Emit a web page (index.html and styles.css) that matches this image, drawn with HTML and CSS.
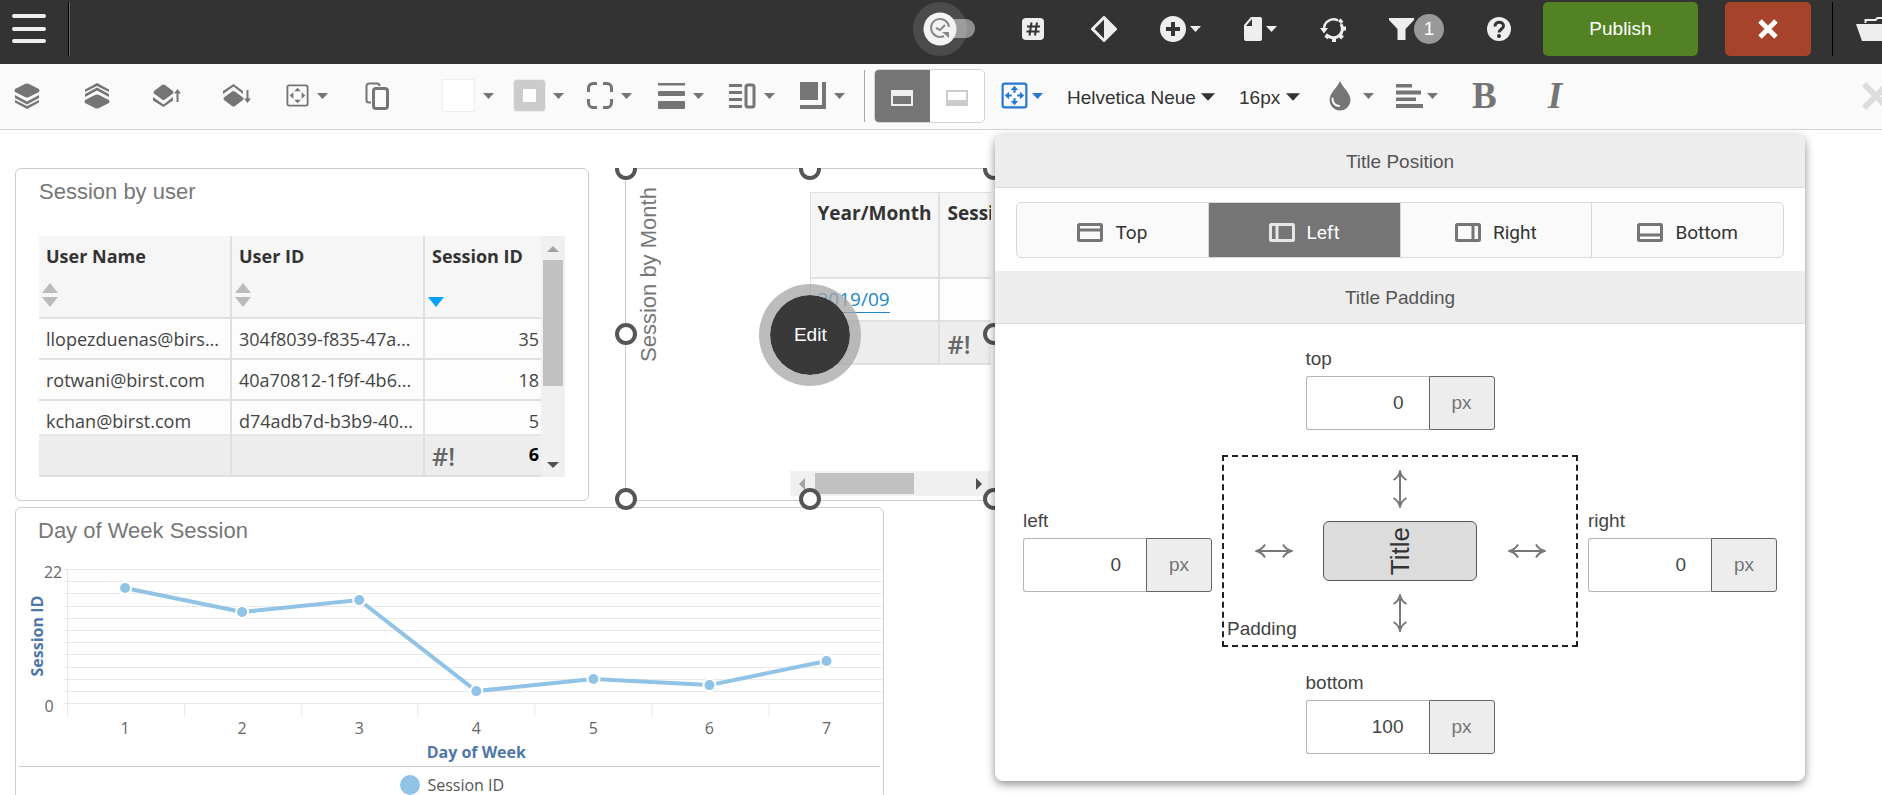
FILE: index.html
```html
<!DOCTYPE html>
<html lang="en">
<head>
    <meta charset="UTF-8">
    <meta name="viewport" content="width=device-width, initial-scale=1.0">
    <title>Dashboard Editor</title>
    <link rel="stylesheet" href="styles.css">
</head>
<body>
    <svg width="0" height="0" class="defs" aria-hidden="true">
        <symbol id="caret" viewBox="0 0 11 6"><path d="M0 0h11L5.500 6z" fill="currentColor"/></symbol>
        <symbol id="move-box" viewBox="0 0 25 25">
            <rect x="1.500" y="1.500" width="22" height="22" rx="2" fill="none" stroke="currentColor" stroke-width="2"/>
            <path d="M12.500 4l3.500 4h-7zM12.500 21l3.500-4h-7zM4 12.500l4-3.500v7zM21 12.500l-4-3.500v7z" fill="currentColor"/>
        </symbol>
        <symbol id="move-box-bold" viewBox="0 0 25 25">
            <rect x="1.500" y="1.500" width="22" height="22" rx="2" fill="none" stroke="currentColor" stroke-width="2"/>
            <path d="M12.500 3.500l3.500 4h-2.500v2.500h-2V7.500H9zM12.500 21.500l3.500-4h-2.500V15h-2v2.500H9zM3.500 12.500l4-3.500v2.500H10v2H7.500V16zM21.500 12.500l-4-3.500v2.500H15v2h2.500V16z" fill="currentColor"/>
        </symbol>
        <symbol id="arrow-h" viewBox="0 0 38 16"><path d="M3 8h32M10 1.500C8 5 5 7 1.500 8 5 9 8 11 10 14.500M28 1.500c2 3.500 5 5.500 8.500 6.500-3.500 1-6.500 3-8.500 6.500" fill="none" stroke="#777" stroke-width="2"/></symbol>
        <symbol id="arrow-v" viewBox="0 0 16 38"><path d="M8 3v32M1.500 10C5 8 7 5 8 1.500 9 5 11 8 14.500 10M1.500 28C5 30 7 33 8 36.500 9 33 11 30 14.500 28" fill="none" stroke="#777" stroke-width="2"/></symbol>
    </svg>

    <header class="topbar">
        <button class="menu-btn" aria-label="Menu">
            <svg width="34" height="32" viewBox="0 0 34 32"><path d="M2 3h30M2 16h30M2 28h30" stroke="#eee" stroke-width="4" stroke-linecap="round"/></svg>
        </button>
        <span class="topbar-divider"></span>
        <div class="actions">
            <label class="switch">
                <input type="checkbox" aria-label="Auto refresh">
                <svg width="62" height="54" viewBox="0 0 62 54">
                    <rect x="20" y="17" width="42" height="19" rx="9" fill="#8f8f8f"/>
                    <circle cx="27" cy="27" r="27" fill="#fff" fill-opacity=".12"/>
                    <circle cx="27" cy="27" r="16.500" fill="#f3f3f3"/>
                    <path d="M31 34a9 9 0 1 1 5-9" fill="none" stroke="#888" stroke-width="2"/>
                    <path d="M29 30h7v6z" fill="#888"/>
                    <path d="M23 26l4 2 5-5" fill="none" stroke="#888" stroke-width="2"/>
                </svg>
            </label>
            <button class="icon-btn wide" aria-label="Number format">
                <svg width="22" height="22" viewBox="0 0 22 22"><rect width="22" height="22" rx="4" fill="#eee"/><path d="M9.500 4.500l-2 13M15 4.500l-2 13M5 8.500h13M4.500 13.500h13" stroke="#333" stroke-width="2"/></svg>
            </button>
            <button class="icon-btn" aria-label="Contrast">
                <svg width="26" height="26" viewBox="0 0 26 26"><path d="M13 1.500L24.500 13 13 24.500 1.500 13z" fill="none" stroke="#eee" stroke-width="3" stroke-linejoin="round"/><path d="M13 2l11 11-11 11z" fill="#eee"/></svg>
            </button>
            <button class="icon-btn" aria-label="Add">
                <svg width="26" height="26" viewBox="0 0 26 26"><circle cx="13" cy="13" r="13" fill="#eee"/><path d="M13 6v14M6 13h14" stroke="#333" stroke-width="4"/></svg>
                <svg class="caret"><use href="#caret"/></svg>
            </button>
            <button class="icon-btn" aria-label="Page">
                <svg width="18" height="24" viewBox="0 0 18 24"><path d="M7 0h9a2 2 0 0 1 2 2v20a2 2 0 0 1-2 2H2a2 2 0 0 1-2-2V8z" fill="#eee"/><path d="M8 2v7H2z" fill="#333"/></svg>
                <svg class="caret"><use href="#caret"/></svg>
            </button>
            <button class="icon-btn" aria-label="Refresh settings">
                <svg width="26" height="26" viewBox="0 0 26 26">
                    <path d="M4 13a9.500 9.500 0 0 1 14-8.500" fill="none" stroke="#eee" stroke-width="2.500"/>
                    <path d="M0 12h8l-4 5.500z" fill="#eee"/>
                    <path d="M21 8a9 9 0 0 1-13 12" fill="none" stroke="#eee" stroke-width="3"/>
                    <path d="M19.500 6.500l2.500-2.500M21 12.500h5M19.500 19l3 3M14 21v5M8.500 18.500L6 22" stroke="#eee" stroke-width="4"/>
                </svg>
            </button>
            <button class="icon-btn filter" aria-label="Filters">
                <svg width="25" height="22" viewBox="0 0 25 22"><path d="M0 0h25v2l-8.500 9v11h-8V11L0 2z" fill="#eee"/></svg>
                <span class="count">1</span>
            </button>
            <button class="icon-btn" aria-label="Help">
                <svg width="24" height="24" viewBox="0 0 24 24"><circle cx="12" cy="12" r="12" fill="#eee"/><path d="M8 9.500C8 3.500 16.500 4 16.500 9c0 3-4.500 3.500-4.500 6.500" fill="none" stroke="#333" stroke-width="3"/><circle cx="12" cy="19" r="2" fill="#333"/></svg>
            </button>
        </div>
        <button class="publish">Publish</button>
        <button class="close" aria-label="Close">
            <svg width="20" height="20" viewBox="0 0 20 20"><path d="M2 2l16 16M18 2L2 18" stroke="#fff" stroke-width="5"/></svg>
        </button>
        <span class="topbar-divider dark"></span>
        <button class="folder" aria-label="Open folder">
            <svg width="40" height="24" viewBox="0 0 40 24"><path d="M0 7h40l-6 17H6z" fill="#eee"/><path d="M9.500 6V3h10l2-2H34v5" fill="none" stroke="#eee" stroke-width="2"/></svg>
        </button>
    </header>

    <div class="toolbar">
        <div class="tools arrange">
            <button aria-label="Bring to front"><svg width="26" height="26" viewBox="0 0 26 26"><path d="M11 1q2-1 4 0l10 5q1 1.500 0 3l-10 5q-2 1-4 0L1 9Q0 7.500 1 6z"/><path d="M1 12l12 6.500L25 12v3l-12 6.500L1 15zM1 17l12 6 12-6v2.500L13 26 1 19.500z"/></svg></button>
            <button aria-label="Send to back"><svg width="26" height="26" viewBox="0 0 26 26"><path d="M11 25q2 1 4 0l10-5q1-1.500 0-3l-10-5q-2-1-4 0L1 17q-1 1.500 0 3z"/><path d="M1 14l12-6.500L25 14v-3L13 4.500 1 11zM1 9l12-6 12 6V6.500L13 0 1 6.500z"/></svg></button>
            <button aria-label="Bring forward"><svg width="28" height="24" viewBox="0 0 28 24"><path d="M9 1q1.500-1 3 0l8 6q1 1 0 2.500l-8 6q-1.500 1-3 0l-8-6Q0 8.500 1 7z"/><path d="M0 13l10.500 7.500L20 13v3.500L10.500 23 0 16.500zM23.500 18V9.500H21L24.500 5l3.500 4.500h-2.500V18z"/></svg></button>
            <button aria-label="Send backward"><svg width="28" height="24" viewBox="0 0 28 24"><path d="M9 22q1.500 1 3 0l8-6q1-1 0-2.500l-8-6q-1.500-1-3 0l-8 6q-1 1 0 2.500z"/><path d="M0 10l10.500-7.500L20 10V7L10.500 0 0 7zM23.500 6v8.500H21l3.500 4.500 3.500-4.500h-2.500V6z"/></svg></button>
            <button aria-label="Padding"><svg width="23" height="23"><use href="#move-box"/></svg><svg class="caret"><use href="#caret"/></svg></button>
            <button aria-label="Duplicate"><svg width="24" height="28" viewBox="0 0 24 28" fill="none" stroke="#757575"><path d="M6 20.500H4a2.500 2.500 0 0 1-2.500-2.500V4A2.500 2.500 0 0 1 4 1.500h8A2.500 2.500 0 0 1 14.500 4" stroke-width="2"/><rect x="8.500" y="6.500" width="14" height="20" rx="2.500" stroke-width="3"/></svg></button>
        </div>
        <div class="tools styling">
            <button aria-label="Background color"><span class="swatch"></span><svg class="caret"><use href="#caret"/></svg></button>
            <button aria-label="Border color"><span class="swatch border-swatch"></span><svg class="caret"><use href="#caret"/></svg></button>
            <button aria-label="Border style"><svg width="26" height="27" viewBox="0 0 26 27"><path d="M1.500 10V6A4.500 4.500 0 0 1 6 1.500h4M16 1.500h4A4.500 4.500 0 0 1 24.500 6v4M24.500 17v4a4.500 4.500 0 0 1-4.500 4.500h-4M10 25.500H6A4.500 4.500 0 0 1 1.500 21v-4" fill="none" stroke="#757575" stroke-width="3"/></svg><svg class="caret"><use href="#caret"/></svg></button>
            <button aria-label="Border width"><svg width="27" height="26" viewBox="0 0 27 26"><path d="M0 0h27v2.500H0z"/><rect y="8" width="27" height="5" rx="1"/><rect y="18" width="27" height="8" rx="1"/></svg><svg class="caret"><use href="#caret"/></svg></button>
            <button aria-label="Spacing"><svg width="27" height="26" viewBox="0 0 27 26"><path d="M0 1h13v3H0zM0 8h13v3H0zM0 15h13v3H0zM0 22h13v3H0z"/><rect x="17" y="2" width="8" height="22" rx="2" fill="none" stroke="#757575" stroke-width="3"/></svg><svg class="caret"><use href="#caret"/></svg></button>
            <button aria-label="Shadow"><svg width="26" height="27" viewBox="0 0 26 27"><path d="M0 0h18v18H0zM22 0h4v27H0v-4h22z"/></svg><svg class="caret"><use href="#caret"/></svg></button>
        </div>
        <span class="toolbar-divider"></span>
        <div class="view-toggle">
            <button class="active" aria-label="Show title"><svg width="22" height="16" viewBox="0 0 22 16"><rect x="1" y="1" width="20" height="14" fill="none" stroke="#eee" stroke-width="2"/><path d="M0 0h22v6H0z" fill="#eee"/></svg></button>
            <button aria-label="Hide title"><svg width="22" height="16" viewBox="0 0 22 16"><rect x="1" y="1" width="20" height="14" fill="none" stroke="#ccc" stroke-width="2"/><path d="M0 10h22v6H0z" fill="#ccc"/></svg></button>
        </div>
        <div class="text-tools">
            <button class="title-layout" aria-label="Title layout"><svg width="27" height="27"><use href="#move-box-bold"/></svg><svg class="caret"><use href="#caret"/></svg></button>
            <label class="picker"><select aria-label="Font family"><option>Helvetica Neue</option></select><svg class="caret"><use href="#caret"/></svg></label>
            <label class="picker"><select aria-label="Font size"><option>16px</option></select><svg class="caret"><use href="#caret"/></svg></label>
        </div>
        <div class="font-tools">
            <button class="drop" aria-label="Text color"><svg width="22" height="30" viewBox="0 0 22 30"><path d="M11 0c3 7 10.500 12 10.500 19a10.500 10.500 0 0 1-21 0C.5 12 8 7 11 0z"/><path d="M3.500 17.500c0 4 2 7 6.500 7.500" fill="none" stroke="#fafafa" stroke-width="2" stroke-linecap="round"/></svg><svg class="caret"><use href="#caret"/></svg></button>
            <button class="align" aria-label="Text align"><svg width="27" height="24" viewBox="0 0 27 24"><path d="M0 0h16v3.500H0zM0 6.500h25v4H0zM0 13.500h20v3.500H0zM0 20h27v4H0z"/></svg><svg class="caret"><use href="#caret"/></svg></button>
        </div>
        <div class="emphasis">
            <button class="bold">B</button>
            <button class="italic">I</button>
        </div>
        <button class="dismiss" aria-label="Dismiss"><svg width="30" height="30" viewBox="0 0 30 30"><path d="M2 3l24 24M26 3L2 27" stroke="#ddd" stroke-width="6"/></svg></button>
    </div>

    <main class="dashboard">
        <div class="row">
            <section class="tile tile-users">
                <h2>Session by user</h2>
                <div class="table-wrap">
                    <table class="grid users">
                        <thead>
                            <tr>
                                <th>User Name<svg class="sort" viewBox="0 0 16 24"><path d="M8 0l8 10H0zM0 14h16L8 24z"/></svg></th>
                                <th>User ID<svg class="sort" viewBox="0 0 16 24"><path d="M8 0l8 10H0zM0 14h16L8 24z"/></svg></th>
                                <th>Session ID<svg class="sort sorted" viewBox="0 0 16 24"><path d="M0 14h16L8 24z"/></svg></th>
                            </tr>
                        </thead>
                        <tbody>
                            <tr>
                                <td>llopezduenas@birs...</td>
                                <td>304f8039-f835-47a...</td>
                                <td class="num">35</td>
                            </tr>
                            <tr>
                                <td>rotwani@birst.com</td>
                                <td>40a70812-1f9f-4b6...</td>
                                <td class="num">18</td>
                            </tr>
                            <tr class="last">
                                <td>kchan@birst.com</td>
                                <td>d74adb7d-b3b9-40...</td>
                                <td class="num">5</td>
                            </tr>
                        </tbody>
                        <tfoot>
                            <tr>
                                <td></td>
                                <td></td>
                                <td><div class="total"><span class="hash">#!</span><b>6</b></div></td>
                            </tr>
                        </tfoot>
                    </table>
                    <div class="vscroll">
                        <svg class="scroll-arrow" viewBox="0 0 12 6"><path d="M0 6h12L6 0z" fill="#a3a3a3"/></svg>
                        <div class="vthumb"></div>
                        <svg class="scroll-arrow" viewBox="0 0 12 6"><path d="M0 0h12L6 6z" fill="#505050"/></svg>
                    </div>
                </div>
            </section>

            <section class="tile tile-month">
                <h2 class="vertical">Session by Month</h2>
                <div class="month-body">
                    <table class="grid month">
                        <thead>
                            <tr><th>Year/Month</th><th>Session ID</th></tr>
                        </thead>
                        <tbody>
                            <tr><td><a href="#">2019/09</a></td><td></td></tr>
                        </tbody>
                        <tfoot>
                            <tr><td></td><td><span class="hash">#!</span></td></tr>
                        </tfoot>
                    </table>
                    <div class="hscroll">
                        <svg width="6" height="12" viewBox="0 0 6 12"><path d="M6 0v12L0 6z" fill="#a3a3a3"/></svg>
                        <div class="hthumb"></div>
                        <svg width="6" height="12" viewBox="0 0 6 12"><path d="M0 0v12l6-6z" fill="#505050"/></svg>
                    </div>
                </div>
                <!-- resize handles -->
                <div class="handles">
                    <i class="handle top start"></i><i class="handle top middle"></i><i class="handle top end"></i>
                    <i class="handle center start"></i><i class="handle center end"></i>
                    <i class="handle bottom start"></i><i class="handle bottom middle"></i><i class="handle bottom end"></i>
                </div>
                <button class="edit">Edit</button>
            </section>
        </div>

        <section class="tile tile-week">
            <h2>Day of Week Session</h2>
            <svg class="chart" viewBox="0 0 866 216" role="img" aria-label="Session ID by day of week">
                <path class="gridlines" d="M48 19.500h818M48 31.500h818M48 43.500h818M48 56.500h818M48 68.500h818M48 80.500h818M48 92.500h818M48 104.500h818M48 117.500h818M48 129.500h818M48 141.500h818M48 153.500h818M51.500 19v148M168.500 154v13M285.500 154v13M401.500 154v13M518.500 154v13M635.500 154v13M752.500 154v13"/>
                <polyline points="109,38 226,62 343,50 460,141 577,129 693,135 810,111"/>
                <g class="points">
                    <circle cx="109" cy="38" r="6"/>
                    <circle cx="226" cy="62" r="6"/>
                    <circle cx="343" cy="50" r="6"/>
                    <circle cx="460" cy="141" r="6"/>
                    <circle cx="577" cy="129" r="6"/>
                    <circle cx="693" cy="135" r="6"/>
                    <circle cx="810" cy="111" r="6"/>
                </g>
                <g class="labels">
                    <text x="37" y="28">22</text>
                    <text x="33" y="162">0</text>
                    <text x="109" y="184">1</text>
                    <text x="226" y="184">2</text>
                    <text x="343" y="184">3</text>
                    <text x="460" y="184">4</text>
                    <text x="577" y="184">5</text>
                    <text x="693" y="184">6</text>
                    <text x="810" y="184">7</text>
                </g>
                <text class="axis" x="460" y="208">Day of Week</text>
                <text class="axis" transform="translate(27 86) rotate(-90)">Session ID</text>
            </svg>
            <div class="legend"><i></i>Session ID</div>
        </section>
    </main>

    <aside class="popover">
        <h3>Title Position</h3>
        <div class="segments">
            <button><svg width="26" height="19" viewBox="0 0 26 19"><rect x="1.500" y="1.500" width="23" height="16" rx="1"/><path d="M1 7h24"/></svg>Top</button>
            <button class="active"><svg width="26" height="19" viewBox="0 0 26 19"><rect x="1.500" y="1.500" width="23" height="16" rx="1"/><path d="M8 1v17"/></svg>Left</button>
            <button><svg width="26" height="19" viewBox="0 0 26 19"><rect x="1.500" y="1.500" width="23" height="16" rx="1"/><path d="M18 1v17"/></svg>Right</button>
            <button><svg width="26" height="19" viewBox="0 0 26 19"><rect x="1.500" y="1.500" width="23" height="16" rx="1"/><path d="M1 12h24"/></svg>Bottom</button>
        </div>
        <h3>Title Padding</h3>
        <div class="padding-editor">
            <div class="field field-top">
                <label for="pad-top">top</label>
                <div class="input-group"><input id="pad-top" type="text" value="0"><span>px</span></div>
            </div>
            <div class="field field-left">
                <label for="pad-left">left</label>
                <div class="input-group"><input id="pad-left" type="text" value="0"><span>px</span></div>
            </div>
            <div class="preview">
                <svg class="up" width="16" height="38"><use href="#arrow-v"/></svg>
                <svg class="side" width="38" height="16"><use href="#arrow-h"/></svg>
                <div class="title-box"><span>Title</span></div>
                <svg class="side" width="38" height="16"><use href="#arrow-h"/></svg>
                <span class="caption">Padding</span>
                <svg width="16" height="38"><use href="#arrow-v"/></svg>
            </div>
            <div class="field field-right">
                <label for="pad-right">right</label>
                <div class="input-group"><input id="pad-right" type="text" value="0"><span>px</span></div>
            </div>
            <div class="field field-bottom">
                <label for="pad-bottom">bottom</label>
                <div class="input-group"><input id="pad-bottom" type="text" value="100"><span>px</span></div>
            </div>
        </div>
    </aside>
</body>
</html>
```
FILE: styles.css
```css
* {
    box-sizing: border-box;
}
body {
    margin: 0;
    height: 100vh;
    overflow: hidden;
    background: #fff;
    color: #333;
    font-family: "Liberation Sans", Arial, sans-serif;
    font-size: 19px;
}
button {
    display: flex;
    align-items: center;
    justify-content: center;
    padding: 0;
    border: 0;
    background: none;
    color: inherit;
    font: inherit;
    cursor: pointer;
}
svg {
    display: block;
    flex: none;
}
.defs {
    position: absolute;
}
h2, h3 {
    margin: 0;
    font-weight: normal;
}
.caret {
    width: 11px;
    height: 6px;
}

/* top bar */
.topbar {
    display: flex;
    height: 64px;
    padding: 2px 0 8px;
    background: #333;
    color: #eee;
}
.menu-btn {
    width: 68px;
    padding-right: 10px;
}
.topbar-divider {
    width: 2px;
    background: #000;
    border-right: 1px solid #666;
}
.topbar-divider.dark {
    width: 1px;
    border: 0;
    margin: 0 23px 0 21px;
}
.actions {
    display: flex;
    align-items: center;
    gap: 43px;
    margin-left: auto;
}
.switch {
    position: relative;
}
.switch input {
    position: absolute;
    inset: 0;
    margin: 0;
    appearance: none;
}
.icon-btn {
    gap: 4px;
}
.icon-btn.wide {
    width: 30px;
}
.icon-btn.filter {
    gap: 0;
    height: 30px;
}
.count {
    width: 30px;
    line-height: 30px;
    border-radius: 50%;
    background: #999;
    color: #fff;
}
.publish, .close {
    border-radius: 5px;
    color: #fff;
}
.publish {
    width: 155px;
    margin: 0 27px 0 32px;
    background: #528224;
}
.close {
    width: 86px;
    background: #a5432b;
}
.folder {
    width: 26px;
    overflow: hidden;
    justify-content: flex-start;
}

/* toolbar */
.toolbar {
    display: flex;
    align-items: center;
    height: 66px;
    padding-bottom: 2px;
    background: #fafafa;
    border-bottom: 1px solid #d4d4d4;
    color: #757575;
    fill: #757575;
}
.tools {
    display: flex;
}
.tools button {
    gap: 8px;
    height: 34px;
}
.arrange {
    margin-left: -8px;
}
.arrange button {
    width: 70px;
}
.styling {
    margin-left: 20px;
}
.styling button {
    width: 71px;
}
.swatch {
    width: 33px;
    height: 33px;
    border: 1px solid #eee;
    background: #fff;
}
.border-swatch {
    width: 31px;
    height: 31px;
    border: 9px solid #ccc;
    border-radius: 2px;
    outline: 1px solid #eee;
}
.toolbar-divider {
    width: 1px;
    height: 52px;
    margin: 0 9px 0 6px;
    background: #aaa;
}
.view-toggle {
    display: flex;
    width: 111px;
    height: 54px;
    border: 1px solid #d4d4d4;
    border-radius: 5px;
    background: #fff;
    overflow: hidden;
}
.view-toggle button {
    flex: 1;
    padding-top: 4px;
}
.view-toggle .active {
    background: #757575;
}
.text-tools {
    display: flex;
    align-items: center;
    gap: 24px;
    margin-left: 16px;
}
.title-layout {
    gap: 4px;
    color: #2578cf;
}
.picker {
    display: flex;
    align-items: center;
    gap: 5px;
    padding-top: 3px;
    color: #333;
}
.picker .caret {
    width: 14px;
    height: 8px;
}
.picker select {
    appearance: none;
    padding: 0;
    border: 0;
    background: none;
    color: #333;
    font: inherit;
}
.font-tools {
    display: flex;
    gap: 22px;
    margin-left: 29px;
}
.drop {
    gap: 12px;
}
.align {
    gap: 4px;
}
.emphasis {
    display: flex;
    gap: 51px;
    margin-left: 34px;
    font: bold 37px/40px "Liberation Serif", "Times New Roman", serif;
}
.italic {
    font-style: italic;
}
.dismiss {
    width: 20px;
    margin-left: auto;
    justify-content: flex-start;
    overflow: hidden;
}

/* dashboard */
.dashboard {
    padding: 38px 15px 0;
}
.row {
    display: flex;
    gap: 36px;
    margin-bottom: 6px;
}
.tile {
    border: 1px solid #ccc;
    border-radius: 6px;
    background: #fff;
}
.tile h2 {
    color: #777;
    font-size: 22px;
    line-height: 26px;
}
.tile-users {
    flex: 0 0 31%;
    height: 333px;
    padding: 10px 23px;
}
.table-wrap {
    display: flex;
    margin-top: 31px;
}
.grid {
    flex: 1;
    width: 100%;
    table-layout: fixed;
    border-spacing: 0;
    font-family: "Open Sans", "Noto Sans", sans-serif;
    font-size: 18px;
    line-height: 25px;
}
.grid th, .grid td {
    height: 41px;
    padding: 8px 0 0 7px;
    border: solid #e0e0e0;
    border-width: 0 2px 2px 0;
    text-align: left;
    vertical-align: top;
    white-space: nowrap;
}
.grid th {
    background: #f6f6f6;
    font-weight: 700;
}
.grid tbody td {
    background: #fdfdfd;
    color: #444;
}
.grid tfoot td {
    background: #ededed;
}
.grid th:last-child, .grid td:last-child {
    border-right: 0;
}
.users th {
    width: 193px;
    height: 83px;
}
.users th:last-child {
    width: auto;
}
.users .last td {
    height: 35px;
    border-bottom-color: #e6e6e6;
}
.users .num {
    padding-right: 2px;
    text-align: right;
}
.users tfoot td {
    padding-top: 6px;
}
.sort {
    width: 16px;
    height: 24px;
    margin: 14px 0 0 -4px;
    fill: #bbb;
}
.sorted {
    fill: #09a1ff;
}
.total {
    display: flex;
    justify-content: space-between;
    padding-right: 2px;
    color: #000;
}
.hash {
    color: #666;
    font-size: 25px;
    font-weight: 600;
    line-height: 28px;
}
.vscroll {
    display: flex;
    flex-direction: column;
    align-items: center;
    width: 24px;
    padding: 10px 0 9px;
    background: #f0f0f0;
}
.scroll-arrow {
    width: 12px;
    height: 6px;
}
.vthumb {
    width: 20px;
    height: 126px;
    margin: 8px 0 auto;
    background: #c1c1c1;
}
.tile-month {
    position: relative;
    display: flex;
    flex: 0 0 20%;
    height: 333px;
    border-radius: 0;
}
.tile h2.vertical {
    margin: 21px 0 0 10px;
    height: 172px;
    writing-mode: vertical-rl;
    transform: rotate(180deg);
    white-space: nowrap;
}
.month-body {
    display: flex;
    flex-direction: column;
    width: 201px;
    margin: 23px 4px 4px auto;
    overflow: hidden;
}
.month {
    flex: none;
    width: 300px;
    margin-left: 20px;
    border: solid #e0e0e0;
    border-width: 1px 0 0 1px;
    font-size: 19px;
}
.month th {
    height: 86px;
}
.month th:first-child {
    width: 129px;
}
.month td {
    height: 43px;
}
.month th:last-child, .month td:last-child {
    padding-left: 8px;
}
.month a {
    display: inline-block;
    border-bottom: 1px solid #2187c4;
    color: #2187c4;
    text-decoration: none;
}
.hscroll {
    display: flex;
    align-items: center;
    gap: 10px;
    height: 25px;
    margin-top: auto;
    padding: 0 9px;
    background: #f0f0f0;
}
.hthumb {
    width: 99px;
    height: 21px;
    margin-right: auto;
    background: #c1c1c1;
}
/* handles above the top edge of the canvas row are cut off */
.handles {
    position: absolute;
    inset: -1px -12px -12px -12px;
    overflow: hidden;
}
.handle {
    position: absolute;
    width: 22px;
    height: 22px;
    margin: -11px;
    border: 4px solid #555;
    border-radius: 50%;
    background: #fff;
}
.handle.top {
    top: 1px;
}
.handle.center {
    top: calc(50% - 6px);
}
.handle.bottom {
    bottom: 13px;
}
.handle.start {
    left: 12px;
}
.handle.middle {
    left: 50%;
}
.handle.end {
    right: 13px;
}
.edit {
    position: absolute;
    top: 50%;
    left: 50%;
    width: 102px;
    height: 102px;
    margin: -51px;
    border: 11px solid rgba(165, 165, 165, 0.75);
    border-radius: 50%;
    background: #393939;
    background-clip: padding-box;
    color: #fff;
}
.tile-week {
    width: 46.9%;
    padding-top: 10px;
}
.tile-week h2 {
    padding: 0 22px;
}
.chart {
    width: 100%;
    margin-top: 6px;
    overflow: visible;
    font-family: "Open Sans", "Noto Sans", sans-serif;
}
.gridlines {
    stroke: #e8e8e8;
}
.chart polyline {
    fill: none;
    stroke: #90c3e6;
    stroke-width: 4;
}
.points {
    fill: #90c3e6;
    stroke: #fff;
    stroke-width: 2;
}
.labels {
    fill: #666;
    font-size: 16px;
    text-anchor: middle;
}
.axis {
    fill: #4f76a8;
    font-size: 16px;
    font-weight: 700;
    text-anchor: middle;
}
.legend {
    display: flex;
    align-items: center;
    justify-content: center;
    gap: 7px;
    margin: 0 3px;
    height: 60px;
    padding: 0 0 23px 6px;
    border-top: 1px solid #ccc;
    color: #555;
    font-family: "Open Sans", "Noto Sans", sans-serif;
    font-size: 16px;
}
.legend i {
    width: 20px;
    height: 20px;
    border-radius: 50%;
    background: #90c3e6;
}

/* title settings popover */
.popover {
    position: absolute;
    top: 135px;
    left: 995px;
    width: 810px;
    border-radius: 8px;
    background: #fff;
    box-shadow: 0 3px 10px rgba(0, 0, 0, 0.45);
    overflow: hidden;
}
.popover h3 {
    height: 53px;
    border-bottom: 1px solid #d8d8d8;
    background: #ededed;
    color: #555;
    font-size: 19px;
    line-height: 53px;
    text-align: center;
}
.segments {
    display: flex;
    margin: 14px 21px 13px;
    border: 1px solid #d8d8d8;
    border-radius: 5px;
    background: #fafafa;
    font-family: Roboto, sans-serif;
    overflow: hidden;
}
.segments button {
    flex: 1;
    gap: 12px;
    height: 54px;
    padding-top: 5px;
}
.segments button + button {
    border-left: 1px solid #d8d8d8;
}
.segments svg {
    fill: none;
    stroke: #757575;
    stroke-width: 3;
}
.segments .active {
    background: #757575;
    color: #fff;
}
.segments .active svg {
    stroke: #e6e6e6;
}
.padding-editor {
    display: grid;
    grid-template-columns: 189px 1fr 189px;
    gap: 25px 10px;
    align-items: center;
    padding: 24px 28px 27px;
}
.field {
    width: 189px;
    color: #444;
}
.field-top, .field-bottom {
    grid-column: 1 / -1;
    justify-self: center;
}
.field label {
    display: block;
    margin-bottom: 6px;
    line-height: 22px;
}
.input-group {
    display: flex;
    height: 54px;
}
.input-group input {
    flex: 1;
    min-width: 0;
    padding: 0 25px 0 10px;
    border: 1px solid #b5b5b5;
    border-right: 0;
    border-radius: 3px 0 0 3px;
    color: #444;
    font: inherit;
    text-align: right;
}
.input-group span {
    width: 66px;
    border: 1px solid #666;
    border-radius: 0 3px 3px 0;
    background: #ededed;
    color: #757575;
    line-height: 52px;
    text-align: center;
}
.preview {
    display: grid;
    grid-template-columns: 1fr 154px 1fr;
    grid-template-rows: 1fr 60px 1fr;
    place-items: center;
    height: 192px;
    border: 2px dashed #222;
}
.preview .up {
    grid-column: 1 / -1;
}
.title-box {
    display: flex;
    align-items: center;
    justify-content: center;
    width: 100%;
    height: 100%;
    border: 1px solid #555;
    border-radius: 6px;
    background: #dcdcdc;
    font-size: 26px;
}
.title-box span {
    writing-mode: vertical-rl;
    transform: rotate(180deg);
}
.caption {
    place-self: end start;
    padding: 0 0 5px 3px;
    color: #444;
}
```
